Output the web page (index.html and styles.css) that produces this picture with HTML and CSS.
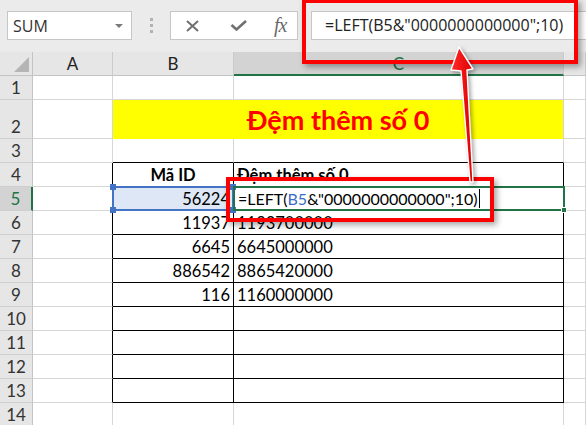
FILE: index.html
```html
<!DOCTYPE html>
<html lang="vi">
<head>
<meta charset="utf-8">
<title>Đệm thêm số 0</title>
<link rel="stylesheet" href="styles.css">
</head>
<body>
<div class="app">
  <div class="fbar">
    <div class="namebox"><span>SUM</span><span class="caret"></span></div>
    <div class="grip"><span class="dot"></span><span class="dot"></span><span class="dot"></span></div>
    <div class="fbtns">
      <svg class="ico-x" width="15" height="12" viewBox="0 0 15 12"><path d="M2 1 L13 11 M13 1 L2 11" stroke="#707070" stroke-width="2" fill="none"/></svg>
      <svg class="ico-ok" width="17" height="11" viewBox="0 0 17 11"><path d="M1.5 5 L6.5 9.5 L16 1" stroke="#707070" stroke-width="2.6" fill="none"/></svg>
      <span class="ico-fx">fx</span>
    </div>
    <div class="finput">=LEFT(B5&amp;"0000000000000";10)</div>
  </div>

  <div class="sheet">
    <div class="corner"><span class="tri"></span></div>
    <div class="ch">A</div>
    <div class="ch">B</div>
    <div class="ch sel">C</div>
    <div class="ch"></div>

    <div class="rh">1</div><div class="c"></div><div class="c"></div><div class="c"></div><div class="c"></div>

    <div class="rh">2</div><div class="c"></div><div class="c title">Đệm thêm số 0</div><div class="c"></div>

    <div class="rh">3</div><div class="c"></div><div class="c bbk"></div><div class="c bbk"></div><div class="c"></div>

    <div class="rh">4</div><div class="c brk"></div><div class="c t head center">Mã ID</div><div class="c t head">Đệm thêm số 0</div><div class="c"></div>

    <div class="rh rsel">5</div><div class="c brk"></div>
    <div class="c t num ref">56224
      <div class="refbox"><span class="hd h1"></span><span class="hd h2"></span><span class="hd h3"></span><span class="hd h4"></span></div>
    </div>
    <div class="c t edit"><span>=LEFT(</span><span class="blue">B5</span><span>&amp;"0000000000000";10)</span><span class="cursor"></span>
      <div class="editbox"><span class="fill"></span></div>
    </div>
    <div class="c"></div>

    <div class="rh">6</div><div class="c brk"></div><div class="c t num">11937</div><div class="c t">1193700000</div><div class="c"></div>
    <div class="rh">7</div><div class="c brk"></div><div class="c t num">6645</div><div class="c t">6645000000</div><div class="c"></div>
    <div class="rh">8</div><div class="c brk"></div><div class="c t num">886542</div><div class="c t">8865420000</div><div class="c"></div>
    <div class="rh">9</div><div class="c brk"></div><div class="c t num">116</div><div class="c t">1160000000</div><div class="c"></div>
    <div class="rh">10</div><div class="c brk"></div><div class="c t"></div><div class="c t"></div><div class="c"></div>
    <div class="rh">11</div><div class="c brk"></div><div class="c t"></div><div class="c t"></div><div class="c"></div>
    <div class="rh">12</div><div class="c brk"></div><div class="c t"></div><div class="c t"></div><div class="c"></div>
    <div class="rh">13</div><div class="c brk"></div><div class="c t"></div><div class="c t"></div><div class="c"></div>
    <div class="rh">14</div><div class="c"></div><div class="c"></div><div class="c"></div><div class="c"></div>
  </div>

  <div class="redbox rb-top"></div>
  <div class="redbox rb-cell"></div>
  <svg class="arrow" width="50" height="150" viewBox="0 0 50 150">
    <defs>
      <linearGradient id="ag" x1="0" y1="0" x2="1" y2="0">
        <stop offset="0" stop-color="#ff2a2a"/>
        <stop offset="1" stop-color="#e00000"/>
      </linearGradient>
    </defs>
    <polygon points="19,7 33,29 27,30 33,142 30,142 21,31 11,30" fill="url(#ag)" stroke="#ffffff" stroke-width="1.4" stroke-linejoin="round"/>
  </svg>
</div>
</body>
</html>
```
FILE: styles.css
```css
* { box-sizing: border-box; }
body {
  margin: 0;
  background: #ffffff;
  font-family: Lato, "Liberation Sans", sans-serif;
}
.app {
  position: relative;
  width: 586px;
  height: 425px;
  overflow: hidden;
}

/* formula bar */
.fbar {
  height: 52px;
  background: #ebebeb;
  display: flex;
  align-items: flex-start;
  padding-top: 11px;
}
.namebox {
  margin-left: 7px;
  width: 125px;
  height: 29px;
  background: #fff;
  border: 1px solid #c6c6c6;
  display: flex;
  align-items: center;
  justify-content: space-between;
  padding: 0 8px 0 5px;
  font-family: "Open Sans", sans-serif;
  font-size: 16px;
  color: #333;
}
.caret {
  width: 0;
  height: 0;
  border-left: 4px solid transparent;
  border-right: 4px solid transparent;
  border-top: 4px solid #7a7a7a;
}
.grip {
  width: 38px;
  display: flex;
  flex-direction: column;
  align-items: center;
  gap: 3px;
  padding-top: 7px;
}
.dot {
  width: 3px;
  height: 3px;
  background: #b2b2b2;
}
.fbtns {
  width: 128px;
  height: 29px;
  background: #fff;
  border: 1px solid #c6c6c6;
  display: flex;
  align-items: center;
  padding-left: 14px;
}
.ico-x { margin-left: 0; }
.ico-ok { margin-left: 30px; }
.ico-fx {
  margin-left: 27px;
  font-family: "Liberation Serif", serif;
  font-style: italic;
  font-size: 20px;
  color: #6a6a6a;
  letter-spacing: -1px;
}
.finput {
  margin-left: 13px;
  flex: 1;
  height: 29px;
  background: #fff;
  border: 1px solid #c6c6c6;
  border-right: none;
  padding-left: 13px;
  font-family: "Open Sans", sans-serif;
  font-size: 16px;
  line-height: 27px;
  color: #222;
  white-space: nowrap;
}

/* sheet */
.sheet {
  display: grid;
  grid-template-columns: 33px 80px 121px 330px 22px;
  grid-template-rows: 24px 24px 39px repeat(12, 24px);
}
.corner {
  background: #e6e6e6;
  border-right: 1px solid #c4c4c4;
  border-bottom: 1px solid #c4c4c4;
  position: relative;
}
.tri {
  position: absolute;
  right: 3px;
  bottom: 3px;
  width: 0;
  height: 0;
  border-left: 15px solid transparent;
  border-bottom: 15px solid #b5b5b5;
}
.ch {
  background: #e6e6e6;
  border-right: 1px solid #cbcbcb;
  border-bottom: 1px solid #c4c4c4;
  display: flex;
  align-items: center;
  justify-content: center;
  font-size: 17px;
  color: #222;
}
.ch.sel {
  background: #d3d3d3;
  color: #217346;
  border-bottom: 2px solid #217346;
}
.rh {
  background: #e6e6e6;
  border-right: 1px solid #c4c4c4;
  border-bottom: 1px solid #cfcfcf;
  display: flex;
  align-items: flex-end;
  justify-content: center;
  padding-bottom: 1px;
  font-size: 17px;
  line-height: 20px;
  color: #333;
}
.rh.rsel {
  background: #d3d3d3;
  color: #217346;
  border-right: 2px solid #217346;
}
.c {
  border-right: 1px solid #d6d6d6;
  border-bottom: 1px solid #d6d6d6;
  display: flex;
  align-items: flex-end;
  padding: 0 3px 1px;
  font-size: 16.5px;
  line-height: 20px;
  color: #000;
  white-space: nowrap;
}
.c.bbk { border-bottom-color: #000; }
.c.brk { border-right-color: #000; }
.c.t { border-right-color: #000; border-bottom-color: #000; }
.c.num { justify-content: flex-end; }
.c.head { font-weight: 700; font-size: 16.5px; }
.c.center { justify-content: center; }
.c.title {
  grid-column: span 2;
  background: #ffff00;
  border-bottom-color: #ffff00;
  justify-content: center;
  align-items: center;
  padding-top: 3px;
  color: #ff0000;
  font-weight: 700;
  font-size: 27px;
}

/* reference highlight on B5 */
.c.ref {
  position: relative;
  background: #dde7f5;
}
.refbox {
  position: absolute;
  left: -1px;
  top: -1px;
  right: -1px;
  bottom: -1px;
  border: 2px solid #4472c4;
}
.hd {
  position: absolute;
  width: 6px;
  height: 6px;
  background: #4472c4;
}
.h1 { left: -4px; top: -4px; }
.h2 { right: -4px; top: -4px; }
.h3 { left: -4px; bottom: -4px; }
.h4 { right: -4px; bottom: -4px; }

/* editing cell C5 */
.c.edit {
  position: relative;
  padding-left: 4px;
  font-size: 16px;
}
.blue { color: #3b6cc6; }
.cursor {
  display: inline-block;
  width: 1px;
  height: 19px;
  background: #000;
  margin-left: 1px;
  align-self: center;
}
.editbox {
  position: absolute;
  left: -1px;
  top: -1px;
  right: -2px;
  bottom: -1px;
  border: 2px solid #217346;
}
.fill {
  position: absolute;
  right: -4px;
  bottom: -4px;
  width: 6px;
  height: 6px;
  background: #217346;
  border: 1px solid #fff;
}

/* callouts */
.redbox {
  position: absolute;
  border: 4px solid #ff0000;
  box-shadow: 3px 3px 6px rgba(0, 0, 0, 0.35);
}
.rb-top {
  left: 302px;
  top: -1px;
  width: 276px;
  height: 65px;
}
.rb-cell {
  left: 226px;
  top: 177px;
  width: 268px;
  height: 45px;
}
.arrow {
  position: absolute;
  left: 440px;
  top: 40px;
  filter: drop-shadow(2px 2px 2px rgba(0, 0, 0, 0.35));
}
```
